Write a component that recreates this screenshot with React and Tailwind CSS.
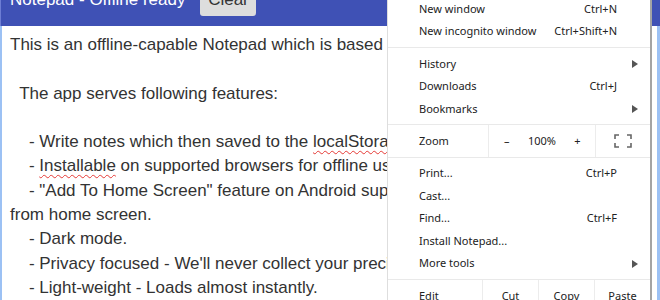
import React from "react";

const lines = [
  "This is an offline-capable Notepad which is based on Preact and Parcel.",
  "",
  "  The app serves following features:",
  "",
  "SPELL1",
  "SPELL2",
  '    - "Add To Home Screen" feature on Android supported devices to launch the app',
  "from home screen.",
  "    - Dark mode.",
  "    - Privacy focused - We'll never collect your precious data.",
  "    - Light-weight - Loads almost instantly.",
];

const Misspelled = ({ children }) => (
  <span className="underline decoration-wavy decoration-[#e53935] decoration-1 underline-offset-[3px]">
    {children}
  </span>
);

const renderLine = (line, i) => {
  if (line === "SPELL1") {
    return (
      <div key={i}>
        {"    - Write notes which then saved to the "}
        <Misspelled>localStorage</Misspelled>.
      </div>
    );
  }
  if (line === "SPELL2") {
    return (
      <div key={i}>
        {"    - "}
        <Misspelled>Installable</Misspelled>
        {" on supported browsers for offline usage."}
      </div>
    );
  }
  return <div key={i}>{line === "" ? "\u00a0" : line}</div>;
};

const Arrow = () => (
  <svg width="6" height="8" viewBox="0 0 6 8" className="ml-auto">
    <path d="M0 0 L6 4 L0 8 Z" fill="#555" />
  </svg>
);

const FullscreenIcon = () => (
  <svg width="18" height="14" viewBox="0 0 18 14" fill="none" stroke="#666" strokeWidth="1.6">
    <path d="M1 5 V1 H5" />
    <path d="M13 1 H17 V5" />
    <path d="M17 9 V13 H13" />
    <path d="M5 13 H1 V9" />
  </svg>
);

const MenuItem = ({ label, shortcut, submenu }) => (
  <div className="flex h-[22.5px] items-center pl-[31px] pr-[12px]">
    <span>{label}</span>
    {shortcut && <span className="ml-auto mr-[21px]">{shortcut}</span>}
    {submenu && <Arrow />}
  </div>
);

const Separator = ({ className }) => (
  <div className={className}>
    <div className="h-px bg-[#e9e9e9]" />
  </div>
);

const ChromeMenu = () => (
  <div
    className="absolute left-[387px] top-[-10px] w-[265px] border-l border-r-2 border-l-[#dedede] border-r-[#a4a4a4] bg-white pt-[7.75px] text-[11px] text-[#222]"
    style={{ fontFamily: '"Noto Sans", "Open Sans", sans-serif' }}
  >
    <MenuItem label="New window" shortcut="Ctrl+N" />
    <MenuItem label="New incognito window" shortcut="Ctrl+Shift+N" />
    <Separator className="pt-[4px] pb-[5px]" />
    <MenuItem label="History" submenu />
    <MenuItem label="Downloads" shortcut="Ctrl+J" />
    <MenuItem label="Bookmarks" submenu />

    <div className="mt-[4px] flex h-[34px] border-y border-[#e9e9e9]">
      <div className="flex w-[100px] items-center pl-[31px]">Zoom</div>
      <div className="flex w-[108px] border-x border-[#ececec]">
        <div className="flex flex-1 items-center justify-center">–</div>
        <div className="flex flex-1 items-center justify-center">100%</div>
        <div className="flex flex-1 items-center justify-center">+</div>
      </div>
      <div className="flex flex-1 items-center justify-center">
        <FullscreenIcon />
      </div>
    </div>

    <div className="mt-[4px]">
      <MenuItem label="Print..." shortcut="Ctrl+P" />
      <MenuItem label="Cast..." />
      <MenuItem label="Find..." shortcut="Ctrl+F" />
      <MenuItem label="Install Notepad..." />
      <MenuItem label="More tools" submenu />
    </div>

    <div className="mt-[4px] flex h-[34px] border-t border-[#e9e9e9]">
      <div className="flex w-[94px] items-center pl-[31px]">Edit</div>
      <div className="flex flex-1 items-center justify-center border-l border-[#ececec]">Cut</div>
      <div className="flex flex-1 items-center justify-center border-l border-[#ececec]">Copy</div>
      <div className="flex flex-1 items-center justify-center border-l border-[#ececec]">Paste</div>
    </div>
  </div>
);

export default function App() {
  return (
    <div
      className="relative flex h-[300px] w-[660px] flex-col overflow-hidden bg-white"
      style={{ fontFamily: '"Liberation Sans", Arial, sans-serif' }}
    >
      <div className="h-[26px] shrink-0 overflow-hidden border-l border-[#6d7dd4] bg-[#3f51b5]">
        <div className="-mt-[16px] flex h-[32px] items-center pl-[9px]">
          <span className="text-[17px] text-white">Notepad - Offline ready</span>
          <button className="ml-[15px] h-[32px] w-[56px] rounded-[3px] bg-[#dddddd] text-[17px] text-[#333]">
            Clear
          </button>
        </div>
      </div>

      <div className="flex-1 overflow-hidden border-l-2 border-r-[3px] border-[#9cc1f4] pl-[8px] pt-[7px] text-[17px] leading-[24.3px] whitespace-pre text-[#333]">
        {lines.map(renderLine)}
      </div>

      <ChromeMenu />
    </div>
  );
}
